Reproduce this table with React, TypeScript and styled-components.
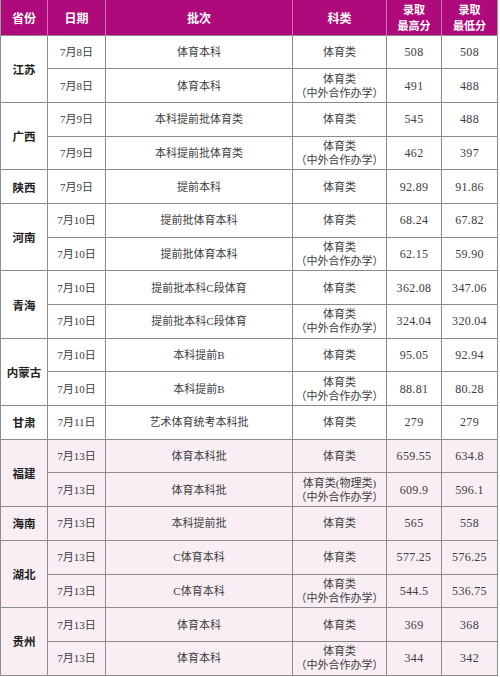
import React from 'react';
import styled, { createGlobalStyle } from 'styled-components';

const GlobalStyle = createGlobalStyle`
  html, body {
    margin: 0;
    padding: 0;
    background: #ffffff;
  }
  body {
    font-family: "Liberation Serif", "Noto Sans CJK SC", serif;
  }
`;

interface Entry {
  date: string;
  batch: string;
  kind: string[];
  high: string;
  low: string;
}

interface Province {
  name: string;
  pink?: boolean;
  rows: Entry[];
}

const COOP = '（中外合作办学）';

const provinces: Province[] = [
  {
    name: '江苏',
    rows: [
      { date: '7月8日', batch: '体育本科', kind: ['体育类'], high: '508', low: '508' },
      { date: '7月8日', batch: '体育本科', kind: ['体育类', COOP], high: '491', low: '488' },
    ],
  },
  {
    name: '广西',
    rows: [
      { date: '7月9日', batch: '本科提前批体育类', kind: ['体育类'], high: '545', low: '488' },
      { date: '7月9日', batch: '本科提前批体育类', kind: ['体育类', COOP], high: '462', low: '397' },
    ],
  },
  {
    name: '陕西',
    rows: [{ date: '7月9日', batch: '提前本科', kind: ['体育类'], high: '92.89', low: '91.86' }],
  },
  {
    name: '河南',
    rows: [
      { date: '7月10日', batch: '提前批体育本科', kind: ['体育类'], high: '68.24', low: '67.82' },
      { date: '7月10日', batch: '提前批体育本科', kind: ['体育类', COOP], high: '62.15', low: '59.90' },
    ],
  },
  {
    name: '青海',
    rows: [
      { date: '7月10日', batch: '提前批本科C段体育', kind: ['体育类'], high: '362.08', low: '347.06' },
      { date: '7月10日', batch: '提前批本科C段体育', kind: ['体育类', COOP], high: '324.04', low: '320.04' },
    ],
  },
  {
    name: '内蒙古',
    rows: [
      { date: '7月10日', batch: '本科提前B', kind: ['体育类'], high: '95.05', low: '92.94' },
      { date: '7月10日', batch: '本科提前B', kind: ['体育类', COOP], high: '88.81', low: '80.28' },
    ],
  },
  {
    name: '甘肃',
    rows: [{ date: '7月11日', batch: '艺术体育统考本科批', kind: ['体育类'], high: '279', low: '279' }],
  },
  {
    name: '福建',
    pink: true,
    rows: [
      { date: '7月13日', batch: '体育本科批', kind: ['体育类'], high: '659.55', low: '634.8' },
      { date: '7月13日', batch: '体育本科批', kind: ['体育类(物理类)', COOP], high: '609.9', low: '596.1' },
    ],
  },
  {
    name: '海南',
    pink: true,
    rows: [{ date: '7月13日', batch: '本科提前批', kind: ['体育类'], high: '565', low: '558' }],
  },
  {
    name: '湖北',
    pink: true,
    rows: [
      { date: '7月13日', batch: 'C体育本科', kind: ['体育类'], high: '577.25', low: '576.25' },
      { date: '7月13日', batch: 'C体育本科', kind: ['体育类', COOP], high: '544.5', low: '536.75' },
    ],
  },
  {
    name: '贵州',
    pink: true,
    rows: [
      { date: '7月13日', batch: '体育本科', kind: ['体育类'], high: '369', low: '368' },
      { date: '7月13日', batch: '体育本科', kind: ['体育类', COOP], high: '344', low: '342' },
    ],
  },
];

const columns = [47, 58, 187, 94, 55, 56];

export default function App() {
  return (
    <>
      <GlobalStyle />
      <Table>
        <colgroup>
          {columns.map((w, i) => (
            <col key={i} style={{ width: w }} />
          ))}
        </colgroup>
        <thead>
          <HeadRow>
            <HeadCell>省份</HeadCell>
            <HeadCell>日期</HeadCell>
            <HeadCell>批次</HeadCell>
            <HeadCell>科类</HeadCell>
            <HeadCell>
              <HeadLine>录取</HeadLine>
              <HeadLine>最高分</HeadLine>
            </HeadCell>
            <HeadCell>
              <HeadLine>录取</HeadLine>
              <HeadLine>最低分</HeadLine>
            </HeadCell>
          </HeadRow>
        </thead>
        <tbody>
          {provinces.map((p) =>
            p.rows.map((r, i) => (
              <Row key={p.name + i} $pink={p.pink}>
                {i === 0 ? <ProvinceCell rowSpan={p.rows.length}>{p.name}</ProvinceCell> : null}
                <Cell>{r.date}</Cell>
                <Cell>{r.batch}</Cell>
                <KindCell>
                  {r.kind.map((k) => (
                    <KindLine key={k}>{k}</KindLine>
                  ))}
                </KindCell>
                <NumCell>{r.high}</NumCell>
                <NumCell>{r.low}</NumCell>
              </Row>
            ))
          )}
        </tbody>
      </Table>
    </>
  );
}

const Table = styled.table`
  width: 498px;
  table-layout: fixed;
  border-collapse: collapse;
  color: #3a3a3a;
`;

const HeadRow = styled.tr`
  height: 35px;
  background: #ae0a7b;
`;

const HeadCell = styled.th`
  padding: 0;
  color: #ffffff;
  font-family: "Noto Sans CJK SC", sans-serif;
  font-weight: 700;
  font-size: 12px;
  line-height: 17px;
  text-align: center;
  vertical-align: middle;
  border-left: 1px solid #d76fb4;
  border-right: 1px solid #d76fb4;

  &:first-child {
    border-left: 1px solid #9a9a9a;
  }
  &:last-child {
    border-right: 1px solid #9a9a9a;
  }
`;

const HeadLine = styled.div`
  font-size: 11px;
  line-height: 16px;
`;

const Row = styled.tr<{ $pink?: boolean }>`
  height: 33.7px;
  background: ${(p) => (p.$pink ? '#f8eef4' : '#ffffff')};
`;

const Cell = styled.td`
  padding: 0;
  border: 1px solid #8c8c8c;
  text-align: center;
  vertical-align: middle;
  font-family: "Liberation Serif", "Noto Sans CJK SC", serif;
  font-size: 11px;
  line-height: 14px;
  color: #3d3d3d;
  white-space: nowrap;
`;

const ProvinceCell = styled(Cell)`
  font-family: "Noto Sans CJK SC", sans-serif;
  font-weight: 700;
  font-size: 11.5px;
  color: #222222;
`;

const KindCell = styled(Cell)`
  font-size: 11px;
`;

const KindLine = styled.div`
  line-height: 14px;
`;

const NumCell = styled(Cell)`
  font-size: 12px;
  letter-spacing: 0.3px;
`;
